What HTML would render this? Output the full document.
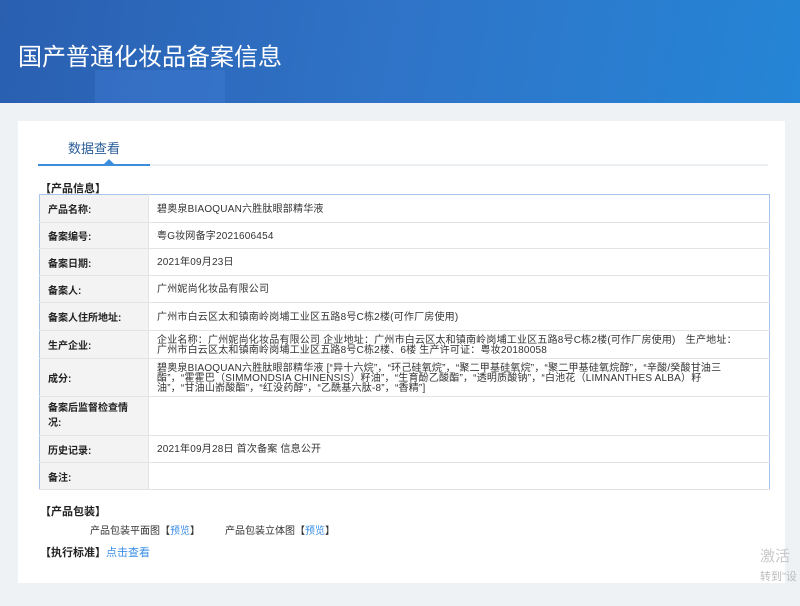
<!DOCTYPE html>
<html><head><meta charset="utf-8"><style>
*{margin:0;padding:0;box-sizing:border-box}
body{width:800px;height:606px;overflow:hidden;background:#eef2f5;font-family:"Liberation Sans","Noto Sans CJK SC",sans-serif;position:relative}
.hd{position:absolute;left:0;top:0;width:800px;height:103px;background:linear-gradient(100deg,#2a5fb0 0%,#2f74c8 50%,#2585d6 100%);overflow:hidden}
.hd .g{position:absolute;left:95px;top:70px;width:130px;height:33px;background:rgba(80,140,230,.25)}
.hd h1{position:absolute;left:18px;top:37px;color:#fff;font-size:24px;font-weight:normal;font-family:"Noto Sans CJK SC",sans-serif}
.card{position:absolute;left:18px;top:121px;width:767px;height:462px;background:#fff}
.tab{position:absolute;left:50px;top:17px;font-size:13px;color:#2a5d9a;font-family:"Noto Sans CJK SC",sans-serif}
.line{position:absolute;left:20px;top:43px;width:730px;height:2px;background:#eceff2}
.line2{position:absolute;left:20px;top:43px;width:112px;height:2px;background:#3c8ddb}
.tri{position:absolute;left:86px;top:38px;border:5px solid transparent;border-bottom-color:#3c8ddb;border-top:0}
.sec{position:absolute;font-size:11px;font-weight:bold;color:#222;font-family:"Noto Sans CJK SC",sans-serif}
table{position:absolute;left:21px;top:73px;width:731px;table-layout:fixed;border-collapse:collapse;border:1px solid #a9c4ea;font-size:10px;font-family:"Liberation Sans","Noto Sans CJK SC",sans-serif}
td{border-bottom:1px solid #e3e3e3;color:#333;vertical-align:middle}
td.l{width:109px;background:#f3f3f3;font-weight:bold;padding:0 20px 0 8px;color:#222;border-right:1px solid #e3e3e3}
td.v{padding:2px 30px 0 8px;line-height:10px;letter-spacing:0.2px}
.blue{color:#3a8ee6}
.wm{position:absolute;left:760px;top:545px;color:#c8c8c8;font-size:15px}
.wm2{position:absolute;left:760px;top:568px;color:#bbb;font-size:11px}
</style></head><body>
<div class="hd"><div class="g"></div><h1>国产普通化妆品备案信息</h1></div>
<div class="card">
<div class="tab">数据查看</div>
<div class="line"></div><div class="line2"></div><div class="tri"></div>
<div class="sec" style="left:22px;top:59px">【产品信息】</div>
<table>
<colgroup><col style="width:109px"><col></colgroup>
<tr style="height:28px"><td class="l">产品名称:</td><td class="v">碧奥泉BIAOQUAN六胜肽眼部精华液</td></tr>
<tr style="height:26px"><td class="l">备案编号:</td><td class="v">粤G妆网备字2021606454</td></tr>
<tr style="height:27px"><td class="l">备案日期:</td><td class="v">2021年09月23日</td></tr>
<tr style="height:27px"><td class="l">备案人:</td><td class="v">广州妮尚化妆品有限公司</td></tr>
<tr style="height:28px"><td class="l">备案人住所地址:</td><td class="v">广州市白云区太和镇南岭岗埔工业区五路8号C栋2楼(可作厂房使用)</td></tr>
<tr style="height:28px"><td class="l">生产企业:</td><td class="v">企业名称：广州妮尚化妆品有限公司 企业地址：广州市白云区太和镇南岭岗埔工业区五路8号C栋2楼(可作厂房使用)　生产地址：广州市白云区太和镇南岭岗埔工业区五路8号C栋2楼、6楼 生产许可证：粤妆20180058</td></tr>
<tr style="height:38px"><td class="l">成分:</td><td class="v">碧奥泉BIAOQUAN六胜肽眼部精华液 [“异十六烷”，“环己硅氧烷”，“聚二甲基硅氧烷”，“聚二甲基硅氧烷醇”，“辛酸/癸酸甘油三酯”，“霍霍巴（SIMMONDSIA CHINENSIS）籽油”，“生育酚乙酸酯”，“透明质酸钠”，“白池花（LIMNANTHES ALBA）籽油”，“甘油山嵛酸酯”，“红没药醇”，“乙酰基六肽-8”，“香精”]</td></tr>
<tr style="height:39px"><td class="l" style="line-height:15px">备案后监督检查情况:</td><td class="v"></td></tr>
<tr style="height:27px"><td class="l">历史记录:</td><td class="v">2021年09月28日 首次备案 信息公开</td></tr>
<tr style="height:27px"><td class="l">备注:</td><td class="v"></td></tr>
</table>
<div class="sec" style="left:22px;top:382px">【产品包装】</div>
<div style="position:absolute;left:72px;top:401px;font-size:10px;color:#333">产品包装平面图【<span class="blue">预览</span>】　　　产品包装立体图【<span class="blue">预览</span>】</div>
<div class="sec" style="left:22px;top:423px">【执行标准】<span class="blue" style="font-weight:normal">点击查看</span></div>
</div>
<div class="wm">激活</div><div class="wm2">转到"设</div>
</body></html>
